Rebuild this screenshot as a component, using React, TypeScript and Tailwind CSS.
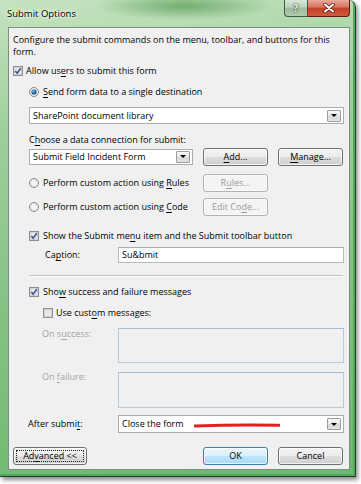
import React from 'react';

const U = ({ children }: { children: React.ReactNode }) => (
  <span className="underline underline-offset-[1.5px] decoration-[0.8px]">{children}</span>
);

function Checkbox({ checked }: { checked?: boolean }) {
  return (
    <svg width="10" height="10" viewBox="0 0 10 10" className="shrink-0">
      <rect x="0.5" y="0.5" width="9" height="9" fill="#f7f7f7" stroke="#8e8f8f" />
      <rect x="1.5" y="1.5" width="7" height="7" fill="#e3e5e9" stroke="#cfd2d6" />
      {checked && <path d="M2.3 5 L4.1 7.3 L7.8 2.2" fill="none" stroke="#3f5389" strokeWidth="1.5" />}
    </svg>
  );
}

function Radio({ checked }: { checked?: boolean }) {
  return (
    <svg width="10" height="10" viewBox="0 0 10 10" className="shrink-0">
      <circle cx="5" cy="5" r="4.5" fill="#ececec" stroke="#8a8a8a" />
      <circle cx="5" cy="5" r="3.3" fill="#f5f5f5" stroke="#d3d3d3" strokeWidth="0.6" />
      {checked && (
        <>
          <circle cx="5" cy="5" r="2.6" fill="#1c5b95" />
          <circle cx="4.5" cy="4.4" r="1.2" fill="#86c4ef" />
        </>
      )}
    </svg>
  );
}

function Arrow() {
  return (
    <span className="mr-[2px] w-[14px] h-[12px] border border-[#9c9c9c] rounded-[1px] bg-[linear-gradient(#f7f7f7,#e6e6e6_50%,#dadada_50%,#e2e2e2)] flex items-center justify-center shrink-0">
      <svg width="6" height="3" viewBox="0 0 6 3">
        <path d="M0 0h6L3 3z" fill="#000" />
      </svg>
    </span>
  );
}

interface BtnProps {
  children: React.ReactNode;
  className?: string;
  disabled?: boolean;
  primary?: boolean;
  focus?: boolean;
}

function Btn({ children, className, disabled, primary, focus }: BtnProps) {
  let look = 'border-[#707070] bg-[linear-gradient(#f3f3f3,#ebebeb_50%,#dddddd_50%,#cfcfcf)] text-black';
  if (disabled) look = 'border-[#adb2b5] bg-[#f4f4f4] text-[#9a9a9a]';
  if (primary) look = 'border-[#3c7fb1] bg-[linear-gradient(#eaf6fd,#d9f0fc_50%,#bee6fd_50%,#a7d9f5)] text-black';
  return (
    <div
      className={
        'relative h-[18px] w-[65px] shrink-0 rounded-[3px] border flex items-center justify-center shadow-[inset_0_0_0_1px_rgba(255,255,255,0.7)] ' +
        look +
        ' ' +
        (className ?? '')
      }
    >
      {focus && <span className="absolute inset-[2px] border border-dotted border-[#222]" />}
      <span>{children}</span>
    </div>
  );
}

export default function App() {
  return (
    <div className="w-[361px] h-[484px] bg-white overflow-hidden font-['Open_Sans',sans-serif] text-[9px] leading-[12px] text-black">
      <div className="w-[356px] h-[477px] rounded-tr-[7px] border-r border-b border-[#23402a] bg-[linear-gradient(172deg,#c6e3c2_0%,#9fcf9b_25%,#84c283_60%,#6cb96f_100%)] shadow-[inset_-2px_-2px_0_#4fa95b,2px_3px_4px_rgba(0,0,0,0.45)] flex flex-col">
        {/* title bar */}
        <div className="h-[27px] flex items-start rounded-tr-[7px] bg-[radial-gradient(ellipse_90px_14px_at_52%_6px,#72ae70,transparent)]">
          <div className="flex-1 pl-[7px] pt-[8px] text-[9.5px] [text-shadow:0_0_6px_#ffffff,0_0_3px_#ffffff]">Submit Options</div>
          <div className="flex mr-[5px]">
            <div className="w-[24px] h-[17px] rounded-bl-[4px] border border-t-0 border-[#3c5b42] bg-[linear-gradient(#d8e7d7,#bcd2bb_45%,#9fbb9e_50%,#adcbad)] flex items-center justify-center text-[10px] font-bold text-white [text-shadow:0_0_1px_#1e2e22,0_0_2px_#1e2e22]">
              ?
            </div>
            <div className="w-[42px] h-[17px] rounded-br-[4px] border border-t-0 border-l-0 border-[#5c1e13] bg-[linear-gradient(#eaa99a,#d8735e_45%,#c2402a_50%,#d2593e)] flex items-center justify-center">
              <svg width="12" height="10" viewBox="0 0 12 10">
                <path d="M2 1.5 L10 8.5 M10 1.5 L2 8.5" stroke="#4a1a10" strokeWidth="3.6" strokeLinecap="round" />
                <path d="M2 1.5 L10 8.5 M10 1.5 L2 8.5" stroke="#ffffff" strokeWidth="2" strokeLinecap="round" />
              </svg>
            </div>
          </div>
        </div>

        {/* content */}
        <div className="ml-[8px] w-[342px] h-[443px] bg-[#f0f0f0] border border-[#7d8f80] flex flex-col">
          <div className="mt-[6px] ml-[4px] w-[330px]">
            Configure the submit commands on the menu, toolbar, and buttons for this form.
          </div>

          <div className="mt-[7px] ml-[4px] h-[12px] flex items-center gap-[3px]">
            <Checkbox checked />
            <span>
              Allow us<U>e</U>rs to submit this form
            </span>
          </div>

          <div className="mt-[9px] ml-[20px] h-[12px] flex items-center gap-[4px]">
            <Radio checked />
            <span>
              <U>S</U>end form data to a single destination
            </span>
          </div>

          <div className="mt-[9px] ml-[20px] w-[315px] h-[17px] bg-white border border-[#a7adb6] flex items-center">
            <span className="flex-1 pl-[3px]">SharePoint document library</span>
            <Arrow />
          </div>

          <div className="mt-[10px] ml-[20px] h-[12px]">
            C<U>h</U>oose a data connection for submit:
          </div>

          <div className="mt-[1px] ml-[20px] h-[19px] flex items-center">
            <div className="w-[164px] h-[16px] bg-white border border-[#a7adb6] flex items-center">
              <span className="flex-1 pl-[3px]">Submit Field Incident Form</span>
              <Arrow />
            </div>
            <Btn className="ml-[10px]">
              <U>A</U>dd...
            </Btn>
            <Btn className="ml-[10px]">
              <U>M</U>anage...
            </Btn>
          </div>

          <div className="mt-[8px] ml-[20px] h-[18px] flex items-center">
            <div className="w-[174px] flex items-center gap-[4px]">
              <Radio />
              <span>
                Perform custom action using <U>R</U>ules
              </span>
            </div>
            <Btn disabled>
              R<U>u</U>les...
            </Btn>
          </div>

          <div className="mt-[6px] ml-[20px] h-[18px] flex items-center">
            <div className="w-[174px] flex items-center gap-[4px]">
              <Radio />
              <span>
                Perform custom action using <U>C</U>ode
              </span>
            </div>
            <Btn disabled>
              Edit Co<U>d</U>e...
            </Btn>
          </div>

          <div className="mt-[14px] ml-[20px] h-[12px] flex items-center gap-[4px]">
            <Checkbox checked />
            <span>
              Show the Submit me<U>n</U>u item and the Submit toolbar button
            </span>
          </div>

          <div className="mt-[5px] ml-[36px] h-[16px] flex items-center">
            <span className="w-[73px]">
              Ca<U>p</U>tion:
            </span>
            <div className="w-[226px] h-[16px] bg-white border border-[#b5b9c0] border-t-[#abadb3] flex items-center pl-[3px]">
              Su&amp;bmit
            </div>
          </div>

          <div className="mt-[12px] ml-[20px] w-[314px] border-t border-t-[#bfbfbf] border-b border-b-white" />

          <div className="mt-[9px] ml-[20px] h-[12px] flex items-center gap-[4px]">
            <Checkbox checked />
            <span>
              Sho<U>w</U> success and failure messages
            </span>
          </div>

          <div className="mt-[9px] ml-[34px] h-[12px] flex items-center gap-[3px]">
            <Checkbox />
            <span>
              Use cust<U>o</U>m messages:
            </span>
          </div>

          <div className="mt-[9px] ml-[33px] h-[35px] flex items-start">
            <span className="w-[76px] text-[#a3a3a3]">
              On s<U>u</U>ccess:
            </span>
            <div className="w-[226px] h-[35px] border border-[#b9c8db] border-t-[#a9bbd2] bg-[#f0f0f0]" />
          </div>

          <div className="mt-[9px] ml-[33px] h-[36px] flex items-start">
            <span className="w-[76px] -mt-[1px] text-[#a3a3a3]">
              On <U>f</U>ailure:
            </span>
            <div className="w-[226px] h-[36px] border border-[#b9c8db] border-t-[#a9bbd2] bg-[#f0f0f0]" />
          </div>

          <div className="mt-[7px] ml-[19px] h-[18px] flex items-center">
            <span className="w-[90px]">
              After submi<U>t</U>:
            </span>
            <div className="w-[226px] h-[18px] bg-white border border-[#a7adb6] flex items-center">
              <span className="pl-[3px]">Close the form</span>
              <svg width="86" height="5" viewBox="0 0 86 5" className="ml-[10px] mt-[2px]">
                <path d="M1 3 Q40 1.4 85 2.2" fill="none" stroke="#e4201e" strokeWidth="3" strokeLinecap="round" />
              </svg>
              <span className="flex-1" />
              <Arrow />
            </div>
          </div>

          <div className="mt-[14px] ml-[4px] h-[18px] flex items-center">
            <Btn className="w-[74px]" focus>
              Ad<U>v</U>anced &lt;&lt;
            </Btn>
            <Btn className="ml-[116px]" primary>
              OK
            </Btn>
            <Btn className="ml-[10px]">Cancel</Btn>
          </div>
        </div>
      </div>
    </div>
  );
}
